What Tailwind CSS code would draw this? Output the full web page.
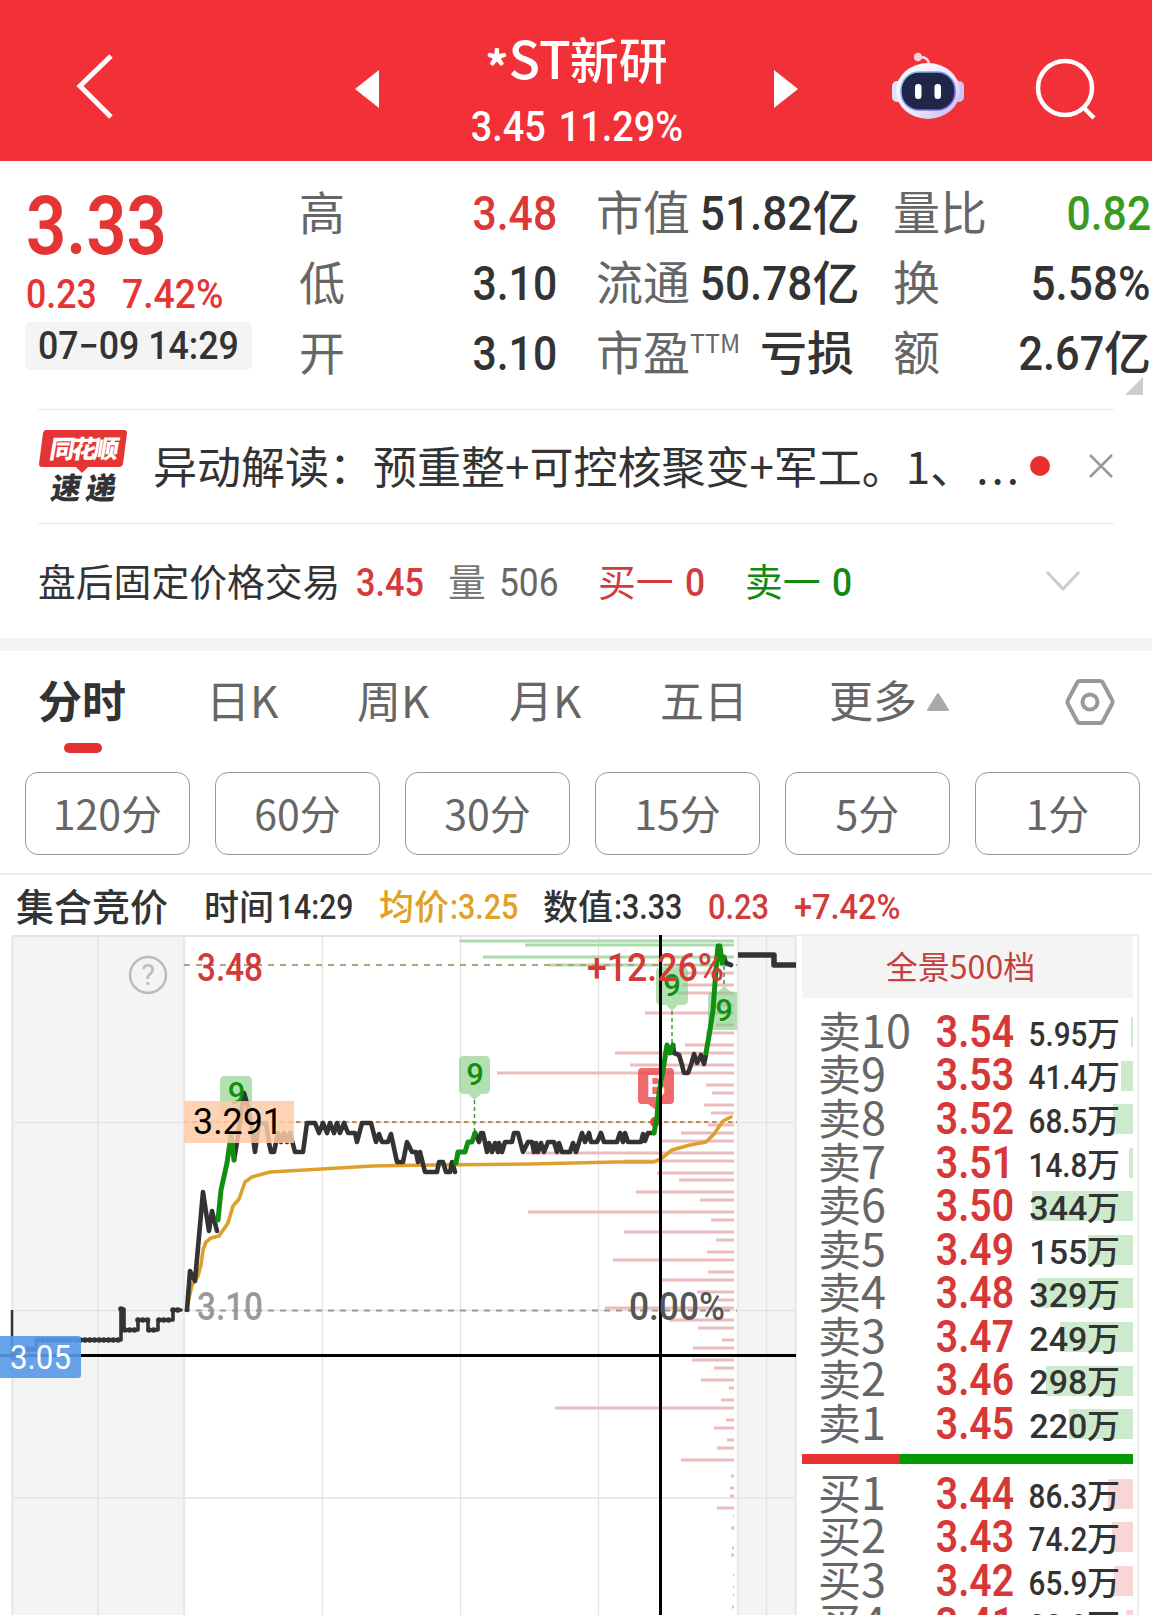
<!DOCTYPE html>
<html lang="zh-CN">
<head>
  <meta charset="UTF-8" />
  <meta name="viewport" content="width=device-width, initial-scale=1.0"/>
  <title>*ST新研 分时</title>
  <script src="https://cdn.jsdelivr.net/npm/@tailwindcss/browser@4"></script>
</head>
<body class="bg-white w-[1152px] h-[1615px] overflow-hidden font-['Noto_Sans_CJK_SC',sans-serif] text-[#333] leading-none">

  <!-- Header -->
  <header class="h-[161px] bg-[#f23038] flex items-center text-white">
    <svg class="ml-[70px] w-[50px] h-[70px] mt-3" viewBox="0 0 50 70" fill="none" stroke="white" stroke-width="5"><path d="M41 4 L10 34 L41 65"/></svg>
    <svg class="ml-[235px] w-6 h-[38px] mt-4" viewBox="0 0 24 38" fill="white"><path d="M24 0 V38 L0 19 Z"/></svg>
    <div class="w-[395px] h-full flex flex-col items-center">
      <h1 class="mt-[32px] h-[50px] flex items-center text-[49px] font-medium whitespace-nowrap"><span class="text-[46px] font-bold pt-4">*</span><span class="text-[52px]">ST</span><span class="-ml-px">新研</span></h1>
      <p class="mt-[23px] h-11 flex items-center font-['Roboto'] text-[42px] font-medium whitespace-nowrap scale-x-[.9] [word-spacing:4px]">3.45 11.29%</p>
    </div>
    <svg class="w-6 h-[38px] mt-4" viewBox="0 0 24 38" fill="white"><path d="M0 0 V38 L24 19 Z"/></svg>
    <!-- Assistant robot -->
    <svg class="ml-[92px] w-[76px] h-[70px] mt-2.5" viewBox="890 51 76 70">
      <defs>
        <linearGradient id="shell" x1="0" y1="0" x2="1" y2="1"><stop offset="0" stop-color="#fff"/><stop offset=".6" stop-color="#ece6fb"/><stop offset="1" stop-color="#b9b4ee"/></linearGradient>
        <linearGradient id="rim" x1="0" y1="0" x2="1" y2="1"><stop offset="0" stop-color="#7fd0ee"/><stop offset="1" stop-color="#7a4be0"/></linearGradient>
      </defs>
      <path d="M920 57 Q929 57 929 65" fill="none" stroke="#f6d5e4" stroke-width="2.5"/>
      <circle cx="918" cy="57" r="4.2" fill="#f5cfdf"/>
      <rect x="892" y="81" width="10" height="21" rx="5" fill="#dfe3fa"/>
      <rect x="954" y="81" width="10" height="21" rx="5" fill="#c9c6f3"/>
      <ellipse cx="928" cy="91" rx="32" ry="28" fill="url(#shell)"/>
      <rect x="901" y="72" width="54" height="38" rx="18" fill="#1f2648" stroke="url(#rim)" stroke-width="1.5"/>
      <rect x="915" y="84" width="6.5" height="15" rx="3" fill="white"/>
      <rect x="934.5" y="84" width="6.5" height="15" rx="3" fill="white"/>
    </svg>
    <svg class="ml-[68px] w-[64px] h-[64px] mt-4" viewBox="0 0 64 64" fill="none" stroke="white" stroke-width="4.5"><circle cx="31" cy="31" r="27"/><path d="M49 50 L60 61"/></svg>
  </header>

  <!-- Quote -->
  <section class="h-[248px] flex">
    <div class="w-[300px] pl-[26px] text-[#e43434] font-['Roboto'] font-medium">
      <div class="mt-[25px] h-20 flex items-center text-[82px] font-semibold origin-left scale-x-[.86]">3.33</div>
      <div class="mt-[6px] h-[44px] flex items-center text-[41px]">
        <span class="w-[96px] origin-left scale-x-[.87]">0.23</span><span class="origin-left scale-x-[.91]">7.42%</span>
      </div>
      <div class="mt-[6px] -ml-px w-[227px] h-12 rounded-md bg-[#f4f4f4] text-[#333] text-[38px] flex items-center pl-[13px] whitespace-nowrap"><span class="origin-left scale-x-[.94]">07−09 14:29</span></div>
    </div>
    <div class="w-[257px] pt-[17px] text-[46px]">
      <div class="h-[70px] flex items-center justify-between"><span class="text-[#666] -ml-px pb-[7px]">高</span><b class="font-['Roboto'] font-medium text-[48px] pt-px text-[#dc3838] origin-right scale-x-[.89]">3.48</b></div>
      <div class="h-[70px] flex items-center justify-between"><span class="text-[#666] -ml-px pb-[7px]">低</span><b class="font-['Roboto'] font-medium text-[48px] pt-px origin-right scale-x-[.89]">3.10</b></div>
      <div class="h-[70px] flex items-center justify-between"><span class="text-[#666] -ml-px pb-[7px]">开</span><b class="font-['Roboto'] font-medium text-[48px] pt-px origin-right scale-x-[.89]">3.10</b></div>
    </div>
    <div class="ml-[39px] w-[258px] pt-[17px] text-[47px]">
      <div class="h-[70px] flex items-center justify-between whitespace-nowrap"><span class="text-[#666] pb-[7px]">市值</span><span class="flex items-center font-medium"><b class="font-['Roboto'] font-medium text-[48px] pt-px origin-right scale-x-[.92]">51.82</b><span class="pb-[7px] -mr-px">亿</span></span></div>
      <div class="h-[70px] flex items-center justify-between whitespace-nowrap"><span class="text-[#666] pb-[7px]">流通</span><span class="flex items-center font-medium"><b class="font-['Roboto'] font-medium text-[48px] pt-px origin-right scale-x-[.92]">50.78</b><span class="pb-[7px] -mr-px">亿</span></span></div>
      <div class="h-[70px] flex items-center justify-between whitespace-nowrap"><span class="text-[#666] flex pb-[7px]">市盈<sup class="text-[25px] top-0 pt-[4px] leading-none self-start">TTM</sup></span><span class="font-medium pb-[7px]">亏损</span></div>
    </div>
    <div class="ml-[39px] w-[258px] pt-[17px] text-[47px]">
      <div class="h-[70px] flex items-center justify-between"><span class="text-[#666] pb-[7px]">量比</span><b class="font-['Roboto'] font-medium text-[48px] pt-px text-[#3a9a22] origin-right scale-x-[.89]">0.82</b></div>
      <div class="h-[70px] flex items-center justify-between"><span class="text-[#666] pb-[7px]">换</span><b class="font-['Roboto'] font-medium text-[48px] pt-px origin-right scale-x-[.92]">5.58%</b></div>
      <div class="h-[70px] flex items-center justify-between"><span class="text-[#666] pb-[7px]">额</span><span class="flex items-center font-medium"><b class="font-['Roboto'] font-medium text-[48px] pt-px origin-right scale-x-[.9]">2.67</b><span class="pb-[7px]">亿</span></span></div>
      <svg class="ml-[232px] -mt-[11px] w-[18px] h-[18px]" viewBox="0 0 18 18" fill="#ccc"><path d="M18 0 V18 H0 Z"/></svg>
    </div>
  </section>

  <!-- News -->
  <section class="mx-[38px] h-[115px] border-y border-[#e9e9e9] flex items-center">
    <svg class="w-[92px] h-[76px] overflow-visible" viewBox="38 429 92 76">
      <path d="M46 430 H124 Q127 430 127 433 L123 464 Q122 467 119 467 H88 L82 473 L76 467 H42 Q39 467 39 464 L43 433 Q44 430 46 430 Z" fill="#e43434"/>
      <g font-family="Noto Sans CJK SC" font-weight="900" text-anchor="middle">
        <text transform="translate(83 458) skewX(-10)" font-size="25" fill="white" textLength="69">同花顺</text>
        <text transform="translate(82 499) skewX(-10)" font-size="30" fill="#333" textLength="65">速递</text>
      </g>
    </svg>
    <p class="ml-[23px] pb-1 w-[877px] text-[44px] whitespace-nowrap">异动解读：预重整+可控核聚变+军工。1、<span class="tracking-[3px] ml-0.5">...</span></p>
    <i class="w-[20px] h-[20px] -mt-0.5 rounded-full bg-[#e83030]"></i>
    <svg class="ml-[38px] w-[26px] h-[26px] -mt-0.5" viewBox="0 0 26 26" stroke="#999" stroke-width="2.5"><path d="M2 2 L24 24 M24 2 L2 24"/></svg>
  </section>

  <!-- After-hours fixed price -->
  <section class="h-[114px] pl-[38px] flex items-center text-[37.8px] whitespace-nowrap">
    <span class="w-[318px] pb-[3px]">盘后固定价格交易</span>
    <span class="w-[92px] pt-[3px] font-['Roboto'] font-medium text-[38px] text-[#d63a3a] origin-left scale-x-[.9]">3.45</span>
    <span class="w-[51px] pb-[3px] text-[#777]">量</span>
    <span class="w-[99px] pt-[3px] font-['Roboto'] text-[38px] text-[#666] origin-left scale-x-[.93]">506</span>
    <span class="w-[87px] pb-[3px] text-[#d03c3c]">买一</span>
    <span class="w-[60px] pt-[3px] font-['Roboto'] font-medium text-[38px] text-[#d03c3c] origin-left scale-x-[.93]">0</span>
    <span class="w-[87px] pb-[3px] text-[#128a12]">卖一</span>
    <span class="w-[213px] pt-[3px] font-['Roboto'] font-medium text-[38px] text-[#128a12] origin-left scale-x-[.93]">0</span>
    <svg class="w-[36px] h-[22px]" viewBox="0 0 36 22" fill="none" stroke="#ccc" stroke-width="3"><path d="M2 2 L18 19 L34 2"/></svg>
  </section>
  <div class="h-[13px] bg-[#f4f4f4]"></div>

  <!-- Period tabs -->
  <nav class="h-[121px] pl-[38px] flex text-[44px] text-[#666] whitespace-nowrap">
    <div class="w-[168px] font-bold text-[#333]"><div class="h-[92px] pt-[26px]">分时</div><div class="ml-[26px] w-[38px] h-[10px] rounded-full bg-[#e43030]"></div></div>
    <div class="w-[151px] pt-[26px]">日K</div>
    <div class="w-[152px] pt-[26px]">周K</div>
    <div class="w-[151px] pt-[26px]">月K</div>
    <div class="w-[169px] pt-[26px]">五日</div>
    <div class="w-[236px] pt-[26px] flex">更多<svg class="ml-[10px] mt-[15px] w-[22px] h-[20px]" viewBox="0 0 22 20" fill="#aaa" stroke="#aaa" stroke-width="2" stroke-linejoin="round"><path d="M11 2 L21 18 H1 Z"/></svg></div>
    <svg class="mt-[27px] w-[50px] h-[48px]" viewBox="0 0 50 48" fill="none" stroke="#999" stroke-width="4" stroke-linejoin="round"><path d="M15 3 H35 Q37 3 38 5 L47 22 Q48 24 47 26 L38 43 Q37 45 35 45 H15 Q13 45 12 43 L3 26 Q2 24 3 22 L12 5 Q13 3 15 3 Z"/><circle cx="25" cy="24" r="7.5"/></svg>
  </nav>

  <!-- Minute buttons -->
  <div class="h-[103px] pl-[25px] flex gap-[25px] text-[41px] text-[#666] border-b-2 border-[#ececec]">
    <button class="w-[165px] h-[83px] pb-[3px] border border-[#999] rounded-[13px]">120分</button>
    <button class="w-[165px] h-[83px] pb-[3px] border border-[#999] rounded-[13px]">60分</button>
    <button class="w-[165px] h-[83px] pb-[3px] border border-[#999] rounded-[13px]">30分</button>
    <button class="w-[165px] h-[83px] pb-[3px] border border-[#999] rounded-[13px]">15分</button>
    <button class="w-[165px] h-[83px] pb-[3px] border border-[#999] rounded-[13px]">5分</button>
    <button class="w-[165px] h-[83px] pb-[3px] border border-[#999] rounded-[13px]">1分</button>
  </div>

  <!-- Cursor info -->
  <div class="h-[59px] pl-[16px] flex items-center text-[35px] font-medium whitespace-nowrap">
    <span class="w-[188px] text-[38px]">集合竞价</span>
    <span class="w-[73px]">时间</span><span class="w-[102px] pt-[5px] font-['Roboto'] origin-left scale-x-[.86]">14:29</span>
    <span class="w-[71px] text-[#e0a024]">均价</span><span class="w-[93px] pt-[5px] font-['Roboto'] text-[#e0a024] origin-left scale-x-[.87]">:3.25</span>
    <span class="w-[71px]">数值</span><span class="w-[94px] pt-[5px] font-['Roboto'] origin-left scale-x-[.87]">:3.33</span>
    <span class="w-[86px] pt-[5px] font-['Roboto'] text-[#d03c3c] origin-left scale-x-[.88]">0.23</span>
    <span class="pt-[5px] font-['Roboto'] text-[#d03c3c] origin-left scale-x-[.93]">+7.42%</span>
  </div>

  <main class="flex">
    <!-- Intraday chart -->
    <svg class="w-[797px] h-[681px] shrink-0" viewBox="0 934 797 681" fill="none">
      <path d="M12 935 H185 V1615 H12 Z M738 935 H796 V1615 H738 Z" fill="#f4f4f4"/>
      <g stroke="#e2e2e2">
        <path d="M12 936 H796" stroke-width="2"/>
        <path d="M98 935 V1615 M322.5 935 V1615 M460.5 935 V1615 M598.5 935 V1615 M766.5 935 V1615 M12 1122.5 H796 M12 1310.5 H796 M12 1498 H796" stroke-width="1.3"/>
        <path d="M12.5 935 V1615 M184 935 V1615 M738 935 V1615 M795.5 935 V1615" stroke-width="2.5" stroke="#e8e8e8"/>
      </g>
      <g id="depth" stroke-width="3"></g>
      <path d="M184 965 H737" stroke="#b3a478" stroke-width="2" stroke-dasharray="6 6"/>
      <path d="M184 1122 H737" stroke="#c58a50" stroke-width="2" stroke-dasharray="4.5 3.5"/>
      <path d="M184 1310.5 H737" stroke="#999" stroke-width="2" stroke-dasharray="6 6"/>

      <circle cx="148" cy="975" r="18" stroke="#bbb" stroke-width="2.5"/>
      <text x="148" y="985" font-family="Roboto" font-size="29" fill="#bbb" text-anchor="middle">?</text>

      <!-- Average price -->
      <path d="M187 1307 L192 1285 L198 1276 L201 1265 L203 1250 L206 1242 L211 1238 L219 1236 L228 1223 L233 1206 L239 1199 L245 1182 L252 1177 L270 1172 L322 1169 L372 1166 L430 1165 L530 1164 L615 1162 L654 1162 L662 1158 L672 1150 L690 1145 L706 1142 L714 1134 L723 1121 L731 1117" stroke="#dda02c" stroke-width="3.6" stroke-linejoin="round" stroke-linecap="round"/>

      <!-- Signal flags -->
      <g fill="#7cc97c" fill-opacity=".58">
        <path d="M225 1076 H247 Q252 1076 252 1081 V1109 Q252 1114 247 1114 H241 L236 1119 L231 1114 H225 Q220 1114 220 1109 V1081 Q220 1076 225 1076 Z"/>
        <path d="M464 1056 H485 Q490 1056 490 1061 V1089 Q490 1094 485 1094 H481 L474.5 1100 L468 1094 H464 Q459 1094 459 1089 V1061 Q459 1056 464 1056 Z"/>
        <path d="M661 967 H683 Q688 967 688 972 V1000 Q688 1005 683 1005 H678 L672 1011 L666 1005 H661 Q656 1005 656 1000 V972 Q656 967 661 967 Z"/>
        <path d="M713 992 H718 L724 986 L731 992 H737 V1030 H713 Q708 1030 708 1025 V997 Q708 992 713 992 Z"/>
      </g>
      <path d="M474.5 1100 V1132 M672 1011 V1045 M724 966 V986" stroke="#3f9a3f" stroke-width="1.5" stroke-dasharray="4 3"/>
      <path d="M642 1068 H670 Q674 1068 674 1072 V1100 Q674 1104 670 1104 H662 L656 1110 L648 1104 H642 Q638 1104 638 1100 V1072 Q638 1068 642 1068 Z" fill="#ea4a4a" fill-opacity=".82"/>
      <circle cx="655" cy="1122" r="5" fill="#e04848"/>
      <text x="656" y="1097" font-family="Roboto" font-weight="500" font-size="31" fill="white" text-anchor="middle">B</text>

      <!-- Price -->
      <g stroke="#333" stroke-width="4.6" stroke-linejoin="round" stroke-linecap="round">
        <path d="M12 1310 V1358" stroke-width="2.5" stroke-linecap="butt"/>
        <path d="M12 1358 H16 V1350 H36 V1340 H121 V1309 H124 V1330 H138 V1320 H148 V1330 H158 V1320 H173 V1310 H181" stroke-width="3.6"/>
        <path d="M28 1349 H36 M38 1340 H121 M121 1309 H124 M125 1330 H138 M138 1320 H148 M149 1330 H158 M159 1320 H173 M173 1310 H181" stroke-width="5.6" stroke-dasharray="0.1 4.6"/>
        <path d="M187 1310 L190 1271 L195 1281 L203 1192 L206 1212 L209 1231 L212 1211 L217 1231"/>
        <path d="M234 1160 L238 1136 L244 1093 L248 1107 L251 1123 L255 1152 L259 1123 L266 1123 L269 1143 L271 1152 L274 1152 L278 1133 L281 1142 L284 1133 L287 1142 L290 1133 L295 1152 L303 1152 L307 1123 L315 1123 L319 1133 L323 1123 L327 1133 L330 1123 L334 1133 L337 1123 L340 1133 L344 1123 L348 1133 L355 1133 L357 1142 L362 1123 L371 1123 L376 1142 L379 1134 L382 1142 L388 1142 L391 1134 L397 1162 L403 1162 L407 1142 L412 1152 L416 1152 L418 1162 L420 1152 L425 1172 L437 1172 L439 1162 L443 1162 L446 1172 L450 1172 L452 1162 L455 1172"/>
        <path d="M475 1133 L479 1142 L481 1133 L483 1133 L487 1152 L489 1143 L492 1152 L495 1143 L498 1152 L499 1143 L502 1152 L505 1142 L512 1142 L514 1133 L518 1133 L523 1152 L528 1142 L532 1142 L534 1152 L536 1143 L538 1152 L541 1143 L544 1152 L548 1142 L554 1142 L557 1152 L559 1143 L562 1152 L570 1152 L573 1143 L576 1152 L582 1133 L585 1142 L589 1133 L591 1142 L597 1142 L601 1133 L604 1142 L617 1142 L620 1133 L623 1142 L625 1133 L628 1142 L641 1142 L643 1134 L645 1141 L648 1133 L654 1133"/>
        <path d="M673 1045 L674 1053 L679 1055 L682 1065 L684 1073 L688 1073 L691 1065 L694 1054 L697 1063 L701 1055 L704 1064 L706 1055"/>
        <path d="M722 960 L724 957 L726 963 L731 965"/>
        <path d="M738 955 H774 V965 H796" stroke-width="5.5" stroke-linecap="butt"/>
      </g>
      <g stroke="#109010" stroke-width="5" stroke-linejoin="round" stroke-linecap="round">
        <path d="M218 1220 L221 1190 L227 1163 L231 1135 L234 1160"/>
        <path d="M456 1163 L458 1152 L465 1152 L468 1142 L472 1142 L475 1133"/>
        <path d="M654 1133 L657 1117 L659 1093 L663 1070 L667 1045 L670 1053 L673 1045"/>
        <path d="M706 1053 L710 1030 L713 1010 L715 983 L717 957 L718 946 L720 946 L722 963 L724 957"/>
      </g>
      <path d="M0 1355.5 H796 M660.5 935 V1615" stroke="black" stroke-width="3"/>

      <g font-family="Roboto" font-size="31" font-weight="500" fill="#109010" text-anchor="middle">
        <text x="236.5" y="1104">9</text><text x="475" y="1085">9</text><text x="672" y="996">9</text><text x="724" y="1021">9</text>
      </g>
      <path d="M184 1101 H294 V1143 H184 Z" fill="#fdcba6" fill-opacity=".85"/>
      <path d="M0 1336 H78 Q81 1336 81 1339 V1375 Q81 1378 78 1378 H0 Z" fill="#5798e8" fill-opacity=".9"/>
      <g font-family="Roboto" font-size="38" font-weight="500">
        <text x="197" y="981" fill="#d23a3a" textLength="66" lengthAdjust="spacingAndGlyphs">3.48</text>
        <text x="197" y="1320" fill="#999" textLength="66" lengthAdjust="spacingAndGlyphs">3.10</text>
        <text x="587" y="981" fill="#d23a3a" textLength="137" lengthAdjust="spacingAndGlyphs">+12.26%</text>
        <text x="629" y="1320" fill="#555" textLength="96" lengthAdjust="spacingAndGlyphs">0.00%</text>
        <text x="193" y="1134" fill="black" font-size="37" font-weight="400" textLength="90" lengthAdjust="spacingAndGlyphs">3.291</text>
        <text x="10" y="1369" fill="white" font-size="34" font-weight="400" textLength="61" lengthAdjust="spacingAndGlyphs">3.05</text>
      </g>
    </svg>

    <!-- Order book -->
    <aside class="w-[342px] h-[681px] border-t-2 border-r-2 border-[#ececec] pl-[5px] pr-1 overflow-hidden">
      <div class="h-[62px] bg-[#f4f4f4] text-[32px] text-[#c44040] flex items-center justify-center pr-3.5 pb-1">全景500档</div>
      <div id="sells" class="pt-[11px]"></div>
      <div class="mt-[9px] mb-[7px] h-[10px] flex"><div class="w-[98px] bg-[#e83232]"></div><div class="flex-1 bg-[#049a04]"></div></div>
      <div id="buys"></div>
    </aside>
  </main>

  <script>
    // [label, price, volume, bar width]
    const sells = [
      ['卖10', '3.54', '5.95', 2], ['卖9', '3.53', '41.4', 12], ['卖8', '3.52', '68.5', 20],
      ['卖7', '3.51', '14.8', 4], ['卖6', '3.50', '344', 101], ['卖5', '3.49', '155', 45],
      ['卖4', '3.48', '329', 96], ['卖3', '3.47', '249', 73], ['卖2', '3.46', '298', 87], ['卖1', '3.45', '220', 64]
    ];
    const buys = [
      ['买1', '3.44', '86.3', 25], ['买2', '3.43', '74.2', 21], ['买3', '3.42', '65.9', 19], ['买4', '3.41', '23.9', 7]
    ];

    const row = (bar) => ([label, price, volume, width]) => `
      <div class="relative h-[43.58px] flex items-center whitespace-nowrap">
        <div class="absolute right-0 top-[8px] h-[30px] ${bar}" style="width:${width}px"></div>
        <span class="relative w-[119px] pl-[16px] pb-[3px] text-[43px] text-[#666]">${label[0]}<span class="text-[45px] leading-[0]">${label.slice(1)}</span></span>
        <span class="relative w-[90px] pl-[17px] pt-px font-['Roboto'] font-semibold text-[45px] text-[#d63838] origin-left scale-x-[.87]">${price}</span>
        <span class="relative ml-auto mr-[13px] pt-[3px] flex items-center text-[33px] font-medium"><span class="pt-[4px] font-['Roboto'] origin-right ${volume.length > 3 ? 'scale-x-[.9]' : 'scale-x-[1.03]'}">${volume}</span>万</span>
      </div>`;
    document.getElementById('sells').innerHTML = sells.map(row('bg-[#cdeacd]')).join('');
    document.getElementById('buys').innerHTML = buys.map(row('bg-[#f9d6d6]')).join('');

    // Volume by price: [y, left end]
    const green = [[941,459.5],[945,525],[957,483],[965,549]];
    const red = [
      [973,685],[985,682],[993,678],[1005,720],[1013,645],[1025,716],[1033,706],[1045,685],[1053,615],[1065,630],[1073,497],
      [1085,706],[1093,712],[1105,704],[1113,711],[1125,708],[1133,681],[1141,659],[1153,526],[1161,624],[1173,657],
      [1180,679],[1192,636],[1200,700],[1212,528],[1220,711],[1232,624],[1240,716],[1252,707],[1260,613],[1272,708],
      [1280,662],[1292,697],[1300,718],[1308,605],[1320,669],[1328,698],[1340,722],[1348,693],[1360,692],[1368,714],
      [1380,701],[1388,729],[1400,721],[1408,555],[1420,726],[1428,714],[1440,727],[1448,717],[1460,681],[1476,731],
      [1488,730],[1496,730],[1508,717],[1516,733],[1528,731],[1548,732],[1555,731],[1575,733],[1587,733],[1595,733],[1607,732]
    ];
    const line = (color) => ([y, x]) => `<path d="M${x} ${y} H734" stroke="${color}"/>`;
    document.getElementById('depth').innerHTML = green.map(line('#a9dcaa')).join('') + red.map(line('#ebbcbe')).join('');
  </script>
</body>
</html>
